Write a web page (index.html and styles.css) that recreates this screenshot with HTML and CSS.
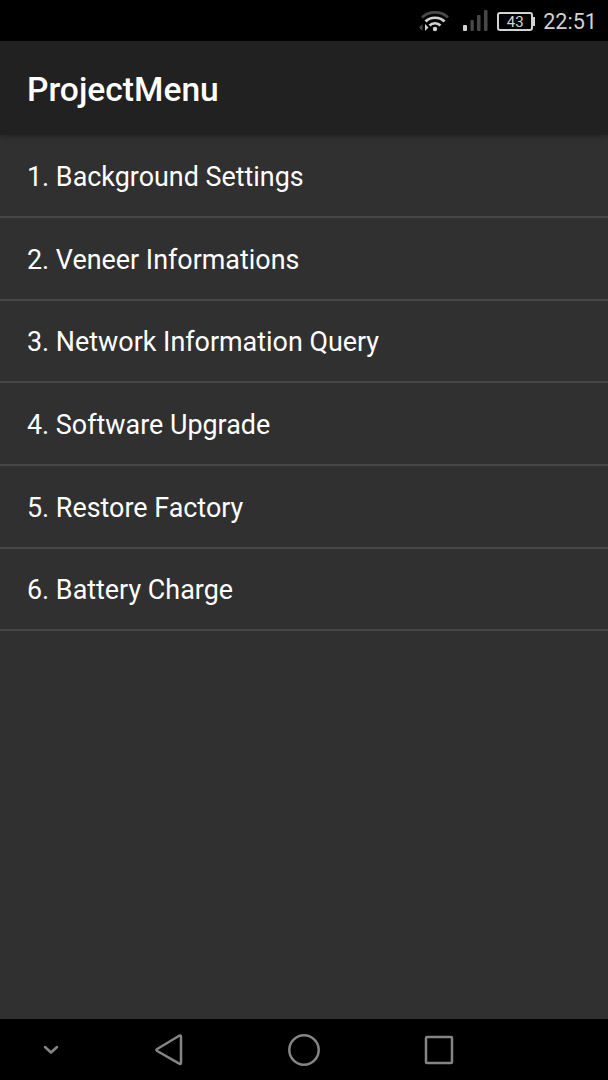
FILE: index.html
```
<!DOCTYPE html>
<html lang="en">
<head>
    <meta charset="UTF-8">
    <meta name="viewport" content="width=device-width, initial-scale=1.0">
    <title>ProjectMenu</title>
    <link rel="stylesheet" href="styles.css">
</head>
<body>
    <div class="status-bar">
        <svg class="wifi" width="34" height="24" viewBox="0 0 34 24" fill="none">
            <path d="M6 7.5C13 .7 25 .7 32 7.5" stroke="#484848" stroke-width="2.7"/>
            <path d="M9.5 11.5C14.5 6.5 23.5 6.5 28.5 11.5M13.5 15.5C16.5 12.5 21.5 12.5 24.5 15.5" stroke="#d2d2d2" stroke-width="2.7"/>
            <circle cx="19" cy="19" r="2.2" fill="#d2d2d2"/>
            <path d="M6.5 14V21L3 17.5Z" fill="#484848"/>
            <path d="M9 14V21L12.5 17.5Z" fill="#d2d2d2"/>
        </svg>
        <svg class="signal" width="26" height="22" viewBox="0 0 26 22">
            <rect x="0" y="15" width="4" height="6" rx="1" fill="#d2d2d2"/>
            <rect x="7.5" y="10" width="3.3" height="11" rx="1" fill="#484848"/>
            <rect x="14" y="5" width="3.5" height="16" rx="1" fill="#484848"/>
            <rect x="21" y="0" width="3.5" height="21" rx="1" fill="#484848"/>
        </svg>
        <div class="battery">43</div>
        <div class="clock">22:51</div>
    </div>

    <div class="header">
        <h1>ProjectMenu</h1>
    </div>

    <ul class="menu">
        <li>1. Background Settings</li>
        <li>2. Veneer Informations</li>
        <li>3. Network Information Query</li>
        <li>4. Software Upgrade</li>
        <li>5. Restore Factory</li>
        <li>6. Battery Charge</li>
    </ul>

    <div class="nav-bar">
        <svg class="nav-hide" width="18" height="12" viewBox="0 0 18 12">
            <path d="M3 3L9 8.5L15 3"/>
        </svg>
        <svg class="nav-back" width="30" height="34" viewBox="0 0 30 34">
            <path d="M25.2 2.8Q27 1.8 27 4V29.5Q27 31.7 25.2 30.7L3.2 18Q1.6 17 3.2 16Z"/>
        </svg>
        <svg class="nav-home" width="34" height="34" viewBox="0 0 34 34">
            <circle cx="17" cy="17" r="14.7"/>
        </svg>
        <svg class="nav-recent" width="30" height="30" viewBox="0 0 30 30">
            <rect x="2" y="2" width="26" height="26" rx="1"/>
        </svg>
    </div>
</body>
</html>
```
FILE: styles.css
```
* {
    box-sizing: border-box;
}

body {
    display: flex;
    flex-direction: column;
    height: 1080px;
    margin: 0;
    overflow: hidden;
    font-family: Roboto, sans-serif;
    background-color: #303030;
    color: #fff;
}

.status-bar {
    display: flex;
    align-items: center;
    justify-content: flex-end;
    height: 41px;
    padding-right: 11px;
    background-color: #000;
    color: #d2d2d2;
}

.wifi {
    margin: 2px 13px 0 0;
}

.signal {
    margin-right: 8px;
}

.battery {
    position: relative;
    width: 36px;
    height: 19px;
    margin: 1px 10px 0 0;
    border: 2px solid #d2d2d2;
    border-radius: 3px;
    font-size: 15px;
    line-height: 16px;
    text-align: center;
}

/* Battery tip */
.battery::after {
    content: "";
    position: absolute;
    top: 3px;
    right: -4px;
    width: 2px;
    height: 9px;
    background-color: #d2d2d2;
}

.clock {
    padding-top: 2px;
    font-size: 21.6px;
    line-height: 26px;
}

.header {
    display: flex;
    align-items: center;
    height: 94px;
    padding: 2px 27px 0;
    background-color: #212121;
    box-shadow: 0 1px 5px rgba(0, 0, 0, 0.3);
}

.header h1 {
    margin: 0;
    font-size: 33.6px;
    font-weight: 500;
}

.menu {
    flex: 1;
    margin: 0;
    padding: 0.2px 0 0;
    list-style: none;
}

.menu li {
    display: flex;
    align-items: center;
    height: 82.7px;
    padding: 2.6px 27px 0;
    border-bottom: 2px solid #474747;
    font-size: 26.9px;
}

.nav-bar {
    display: flex;
    align-items: center;
    height: 61px;
    padding-left: 42px;
    background-color: #000;
}

.nav-bar svg {
    fill: none;
    stroke: #858585;
    stroke-width: 2.5;
    stroke-linecap: round;
    stroke-linejoin: round;
}

.nav-back {
    margin-left: 94px;
}

.nav-home {
    margin-left: 103px;
}

.nav-recent {
    margin-left: 103px;
}
```
